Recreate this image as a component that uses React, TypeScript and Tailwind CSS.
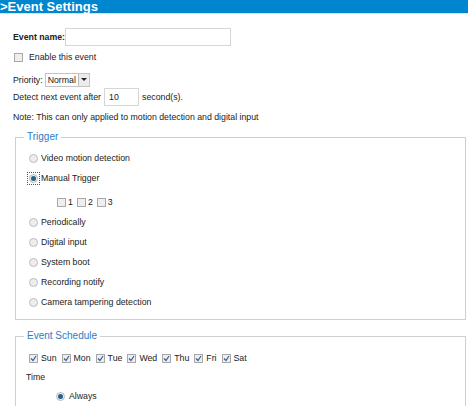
import React from "react";

function Radio({ checked = false, focus = false }: { checked?: boolean; focus?: boolean }) {
  const dot = (
    <span className="w-[9px] h-[9px] rounded-full border border-[#bdbdbd] bg-[#ededed] flex items-center justify-center shrink-0">
      {checked && <span className="w-[5px] h-[5px] rounded-full bg-[#2b5f8a]" />}
    </span>
  );
  if (focus) {
    return (
      <span className="border border-dotted border-[#555] p-[1px] -ml-[2px] -mr-[2px] flex">{dot}</span>
    );
  }
  return dot;
}

function Box({ checked = false }: { checked?: boolean }) {
  return (
    <span className="w-[9px] h-[9px] border border-[#a8a8a8] bg-[#eeeeee] flex items-center justify-center shrink-0">
      {checked && (
        <svg width="7" height="7" viewBox="0 0 7 7">
          <path d="M1 3.5 L3 5.5 L6 1" stroke="#3a5f98" strokeWidth="1.2" fill="none" />
        </svg>
      )}
    </span>
  );
}

function RadioRow({ label, checked, focus }: { label: string; checked?: boolean; focus?: boolean }) {
  return (
    <div className="h-[20px] flex items-center gap-[3px]">
      <Radio checked={checked} focus={focus} />
      <span>{label}</span>
    </div>
  );
}

export default function App() {
  const days = ["Sun", "Mon", "Tue", "Wed", "Thu", "Fri", "Sat"];
  return (
    <div className="w-[468px] h-[406px] overflow-hidden bg-white text-[#222] text-[8.75px] leading-[10px] font-['Liberation_Sans',Arial,sans-serif]">
      <div className="h-[14px] bg-[#0085cf] border-b border-[#cfe2f2] text-white font-bold text-[13px] leading-[13px] whitespace-nowrap">
        &gt;Event Settings
      </div>

      <div className="px-[13px] whitespace-nowrap">
        <div className="mt-[14px] h-[18px] flex items-center">
          <span className="font-bold w-[52px] shrink-0">Event name:</span>
          <span className="w-[166px] h-[18px] border border-[#d6d6d6] bg-white shrink-0" />
        </div>
        <div className="h-[22px] flex items-center gap-[6px] pl-[1px]">
          <Box />
          <span>Enable this event</span>
        </div>
        <div className="h-[20px] pt-[3px] flex items-center gap-[2px]">
          <span>Priority:</span>
          <span className="flex items-center h-[14px] border border-[#c4c4c4] bg-white">
            <span className="px-[2px]">Normal</span>
            <span className="w-[11px] h-[12px] bg-[#ececec] border-l border-[#bbb] flex items-center justify-center">
              <svg width="6" height="4" viewBox="0 0 6 4">
                <path d="M0 0 L6 0 L3 3 Z" fill="#222" />
              </svg>
            </span>
          </span>
        </div>
        <div className="h-[18px] flex items-center">
          <span>Detect next event after</span>
          <span className="ml-[3px] w-[35px] h-[18px] border border-[#d6d6d6] flex items-center pl-[4px]">10</span>
          <span className="ml-[3px]">second(s).</span>
        </div>
        <div className="h-[22px] flex items-center">
          Note: This can only applied to motion detection and digital input
        </div>
      </div>

      <fieldset className="mt-[3px] ml-[15px] w-[451px] border border-[#cfcfcf] pl-[13px] pb-[7px] pt-[5px]">
        <legend className="ml-[-5px] px-[3px] text-[10px] leading-[12px] text-[#2b7cc4]">Trigger</legend>
        <RadioRow label="Video motion detection" />
        <RadioRow label="Manual Trigger" checked focus />
        <div className="mt-[4px] h-[20px] flex items-center pl-[28px]">
          <Box />
          <span className="ml-[2px] mr-[4px]">1</span>
          <Box />
          <span className="ml-[2px] mr-[4px]">2</span>
          <Box />
          <span className="ml-[2px]">3</span>
        </div>
        <RadioRow label="Periodically" />
        <RadioRow label="Digital input" />
        <RadioRow label="System boot" />
        <RadioRow label="Recording notify" />
        <RadioRow label="Camera tampering detection" />
      </fieldset>

      <fieldset className="mt-[10px] ml-[15px] w-[451px] h-[90px] border border-[#cfcfcf] pl-[13px] pt-[6px]">
        <legend className="ml-[-5px] px-[3px] text-[10px] leading-[12px] text-[#2b7cc4]">Event Schedule</legend>
        <div className="h-[20px] flex items-center">
          {days.map((d) => (
            <span key={d} className="flex items-center gap-[3px] mr-[5px]">
              <Box checked />
              <span>{d}</span>
            </span>
          ))}
        </div>
        <div className="h-[18px] flex items-center -ml-[3px]">Time</div>
        <div className="h-[20px] flex items-center gap-[4px] pl-[27px]">
          <Radio checked />
          <span>Always</span>
        </div>
      </fieldset>
    </div>
  );
}
